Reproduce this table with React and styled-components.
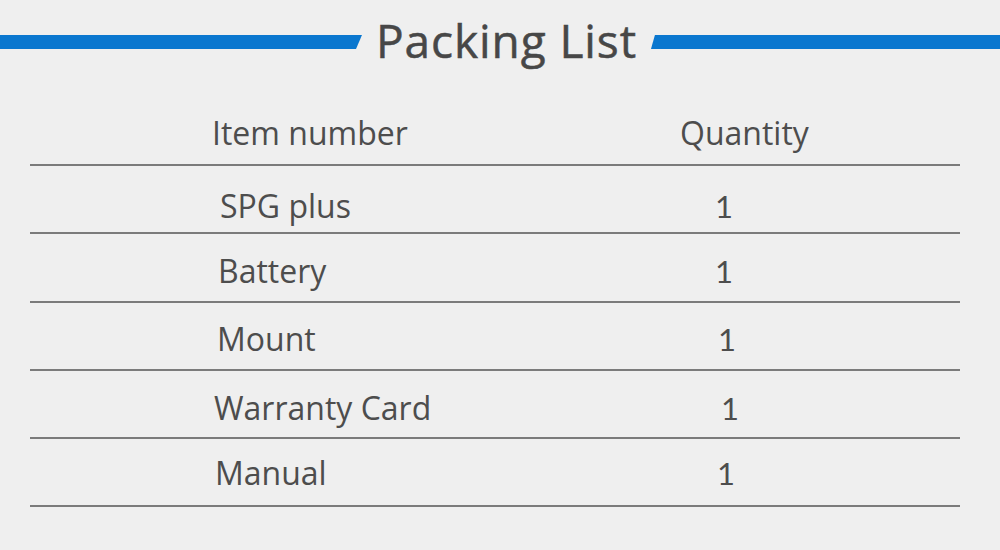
import React from "react";
import styled, { createGlobalStyle } from "styled-components";

const Global = createGlobalStyle`
  html, body { margin: 0; padding: 0; background: #efefef; }
  body { font-family: "Open Sans", "Liberation Sans", sans-serif; color: #4d4d4d; }
`;

const Page = styled.div`
  width: 1000px;
  height: 550px;
  background: #efefef;
  overflow: hidden;
`;

const TitleBar = styled.header`
  height: 84px;
  display: flex;
  align-items: center;
`;

const Stripe = styled.div`
  height: 14px;
  background: #0a77cf;
  box-shadow: 0 -1px 0 #fbfbfb, 0 1px 0 #fbfbfb;
  flex: ${(p) => (p.$side === "left" ? "0 0 362px" : "1 1 auto")};
  clip-path: ${(p) =>
    p.$side === "left"
      ? "polygon(0 0, 100% 0, calc(100% - 6px) 100%, 0 100%)"
      : "polygon(4px 0, 100% 0, 100% 100%, 0 100%)"};
`;

const Heading = styled.h1`
  margin: 0;
  padding: 0 14px 4px 14px;
  font-family: "Open Sans", "Liberation Sans", sans-serif;
  font-weight: 400;
  font-size: 46px;
  line-height: 1;
  letter-spacing: 0.9px;
  color: #474747;
  -webkit-text-stroke: 0.5px #474747;
`;

const Table = styled.div`
  margin-left: 30px;
  width: 930px;
  display: flex;
  flex-direction: column;
`;

const Row = styled.div`
  display: flex;
  align-items: flex-end;
  height: ${(p) => p.$h}px;
  box-sizing: border-box;
  padding-bottom: ${(p) => p.$pb}px;
  border-bottom: 2px solid #7b7b7b;
`;

const NameCell = styled.div`
  flex: 0 0 470px;
  box-sizing: border-box;
  padding-left: ${(p) => p.$x}px;
  font-size: 32px;
  line-height: 30px;
  white-space: nowrap;
`;

const QtyCell = styled.div`
  flex: 1 1 auto;
  padding-left: ${(p) => p.$x}px;
  font-family: ${(p) =>
    p.$head ? '"Open Sans", "Liberation Sans", sans-serif' : 'Lato, "Open Sans", sans-serif'};
  font-size: ${(p) => (p.$head ? 32 : 31)}px;
  line-height: 30px;
  white-space: nowrap;
`;

const rows = [
  { name: "SPG plus", qty: "1", nx: 190, qx: 215, pb: 11, h: 68 },
  { name: "Battery", qty: "1", nx: 188, qx: 215, pb: 15, h: 69 },
  { name: "Mount", qty: "1", nx: 187, qx: 218, pb: 15, h: 68 },
  { name: "Warranty Card", qty: "1", nx: 184, qx: 221, pb: 14, h: 68 },
  { name: "Manual", qty: "1", nx: 185, qx: 217, pb: 17, h: 68 },
];

export default function App() {
  return (
    <Page>
      <Global />
      <TitleBar>
        <Stripe $side="left" />
        <Heading>Packing List</Heading>
        <Stripe $side="right" />
      </TitleBar>
      <Table>
        <Row $h={82} $pb={16}>
          <NameCell $x={182}>Item number</NameCell>
          <QtyCell $head $x={180}>Quantity</QtyCell>
        </Row>
        {rows.map((r) => (
          <Row key={r.name} $h={r.h} $pb={r.pb}>
            <NameCell $x={r.nx}>{r.name}</NameCell>
            <QtyCell $x={r.qx}>{r.qty}</QtyCell>
          </Row>
        ))}
      </Table>
    </Page>
  );
}
